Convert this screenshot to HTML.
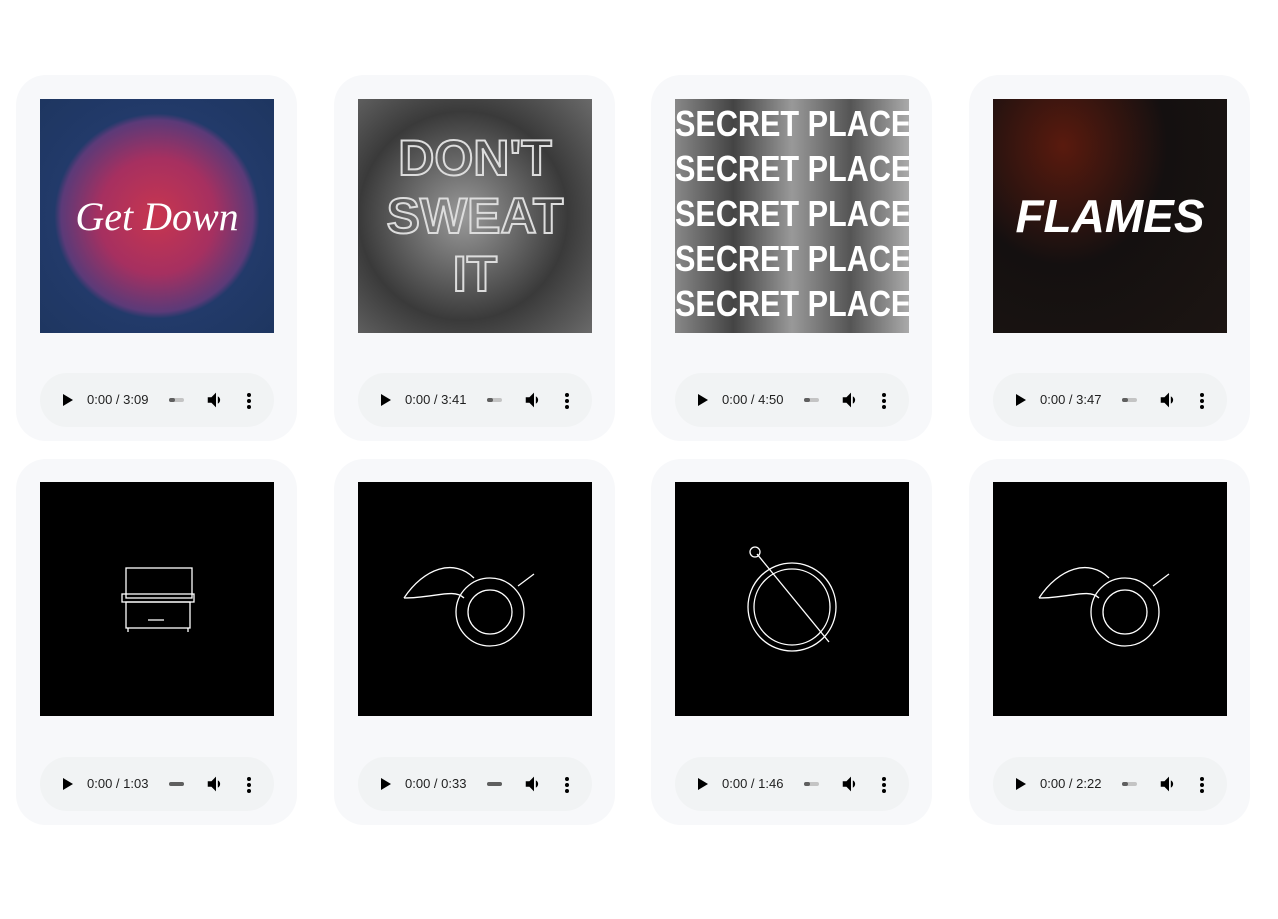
<!DOCTYPE html>
<html><head><meta charset="utf-8"><style>
body{margin:0;background:#fff;width:1278px;height:919px;position:relative;font-family:"Liberation Sans",sans-serif;overflow:hidden}
.card{position:absolute;width:281px;height:366px;background:#f7f8fa;border-radius:30px}
.img{position:absolute;left:24px;top:24px;width:234px;height:234px;overflow:hidden;background:#000}
.aud{position:absolute;left:24px;top:298px;width:234px;height:54px;border-radius:27px;background:#f1f3f4}
.aud .play{position:absolute;left:23px;top:21px;width:0;height:0;border-left:10px solid #000;border-top:6px solid transparent;border-bottom:6px solid transparent}
.aud .t{position:absolute;left:47px;top:19px;font-size:13px;color:#1f1f1f}
.aud .sl{position:absolute;left:129px;top:25px;width:15px;height:4px;border-radius:2px;background:#c4c4c4}
.aud .sl i{position:absolute;left:0;top:0;width:6px;height:4px;border-radius:2px;background:#5f5f5f}
.aud svg{position:absolute}
.dot{position:absolute;left:207px;width:4px;height:4px;border-radius:2px;background:#000}
.c{display:flex;align-items:center;justify-content:center;width:100%;height:100%}
</style></head><body>

<div class="card" style="left:16px;top:75px"><div class="img" style="background:radial-gradient(circle at 50% 50%,#c8354f 0,#a63060 35%,#5b3a78 58%,#223a6a 62%,#1e3660 100%)"><div class="c" style="color:#fff;font-family:'Liberation Serif',serif;font-style:italic;font-size:40px">Get Down</div></div>
<div class="aud"><div class="play"></div><div class="t">0:00 / 3:09</div><div class="sl"><i></i></div><svg style="left:165px;top:16px" width="22" height="22" viewBox="0 0 24 24"><path d="M3 9v6h4l5 5V4L7 9H3zm13.5 3A4.5 4.5 0 0 0 14 8v8a4.5 4.5 0 0 0 2.5-4z"/></svg><div class="dot" style="top:20px"></div><div class="dot" style="top:26px"></div><div class="dot" style="top:32px"></div></div></div>

<div class="card" style="left:334px;top:75px"><div class="img" style="background:radial-gradient(circle at 45% 50%,#9a9a9a,#3a3a3a 60%,#6a6a6a)"><div class="c" style="color:transparent;-webkit-text-stroke:2px #ddd;font-weight:bold;font-size:50px;line-height:58px;text-align:center">DON'T<br>SWEAT<br>IT</div></div>
<div class="aud"><div class="play"></div><div class="t">0:00 / 3:41</div><div class="sl"><i></i></div><svg style="left:165px;top:16px" width="22" height="22" viewBox="0 0 24 24"><path d="M3 9v6h4l5 5V4L7 9H3zm13.5 3A4.5 4.5 0 0 0 14 8v8a4.5 4.5 0 0 0 2.5-4z"/></svg><div class="dot" style="top:20px"></div><div class="dot" style="top:26px"></div><div class="dot" style="top:32px"></div></div></div>

<div class="card" style="left:651px;top:75px"><div class="img" style="background:linear-gradient(90deg,#888,#444,#999,#555,#aaa)"><div style="color:#fff;font-weight:bold;font-size:36px;line-height:45px;white-space:nowrap;transform:scaleX(0.85);transform-origin:0 0;margin-top:2px">SECRET PLACES<br>SECRET PLACES<br>SECRET PLACES<br>SECRET PLACES<br>SECRET PLACES</div></div>
<div class="aud"><div class="play"></div><div class="t">0:00 / 4:50</div><div class="sl"><i></i></div><svg style="left:165px;top:16px" width="22" height="22" viewBox="0 0 24 24"><path d="M3 9v6h4l5 5V4L7 9H3zm13.5 3A4.5 4.5 0 0 0 14 8v8a4.5 4.5 0 0 0 2.5-4z"/></svg><div class="dot" style="top:20px"></div><div class="dot" style="top:26px"></div><div class="dot" style="top:32px"></div></div></div>

<div class="card" style="left:969px;top:75px"><div class="img" style="background:radial-gradient(ellipse at 30% 20%,#5a1a0e,#141010 45%,#1c1512)"><div class="c" style="color:#fff;font-weight:bold;font-style:italic;font-size:46px">FLAMES</div></div>
<div class="aud"><div class="play"></div><div class="t">0:00 / 3:47</div><div class="sl"><i></i></div><svg style="left:165px;top:16px" width="22" height="22" viewBox="0 0 24 24"><path d="M3 9v6h4l5 5V4L7 9H3zm13.5 3A4.5 4.5 0 0 0 14 8v8a4.5 4.5 0 0 0 2.5-4z"/></svg><div class="dot" style="top:20px"></div><div class="dot" style="top:26px"></div><div class="dot" style="top:32px"></div></div></div>

<div class="card" style="left:16px;top:459px"><div class="img" style="top:23px"><svg width="234" height="234" fill="none" stroke="#fff" stroke-width="1.3"><rect x="86" y="86" width="66" height="30"/><rect x="82" y="112" width="72" height="8"/><rect x="86" y="120" width="64" height="26"/><path d="M88 146v4M148 146v4M108 138h16"/></svg></div>
<div class="aud"><div class="play"></div><div class="t">0:00 / 1:03</div><div class="sl"><i style="width:15px"></i></div><svg style="left:165px;top:16px" width="22" height="22" viewBox="0 0 24 24"><path d="M3 9v6h4l5 5V4L7 9H3zm13.5 3A4.5 4.5 0 0 0 14 8v8a4.5 4.5 0 0 0 2.5-4z"/></svg><div class="dot" style="top:20px"></div><div class="dot" style="top:26px"></div><div class="dot" style="top:32px"></div></div></div>

<div class="card" style="left:334px;top:459px"><div class="img" style="top:23px"><svg width="234" height="234" fill="none" stroke="#fff" stroke-width="1.3"><path d="M46 116c20-30 50-40 70-20"/><path d="M46 116c30 0 50-10 60 0"/><circle cx="132" cy="130" r="34"/><circle cx="132" cy="130" r="22"/><path d="M160 104l16-12"/></svg></div>
<div class="aud"><div class="play"></div><div class="t">0:00 / 0:33</div><div class="sl"><i style="width:15px"></i></div><svg style="left:165px;top:16px" width="22" height="22" viewBox="0 0 24 24"><path d="M3 9v6h4l5 5V4L7 9H3zm13.5 3A4.5 4.5 0 0 0 14 8v8a4.5 4.5 0 0 0 2.5-4z"/></svg><div class="dot" style="top:20px"></div><div class="dot" style="top:26px"></div><div class="dot" style="top:32px"></div></div></div>

<div class="card" style="left:651px;top:459px"><div class="img" style="top:23px"><svg width="234" height="234" fill="none" stroke="#fff" stroke-width="1.3"><circle cx="117" cy="125" r="44"/><circle cx="117" cy="125" r="38"/><path d="M82 72l72 88"/><circle cx="80" cy="70" r="5"/></svg></div>
<div class="aud"><div class="play"></div><div class="t">0:00 / 1:46</div><div class="sl"><i></i></div><svg style="left:165px;top:16px" width="22" height="22" viewBox="0 0 24 24"><path d="M3 9v6h4l5 5V4L7 9H3zm13.5 3A4.5 4.5 0 0 0 14 8v8a4.5 4.5 0 0 0 2.5-4z"/></svg><div class="dot" style="top:20px"></div><div class="dot" style="top:26px"></div><div class="dot" style="top:32px"></div></div></div>

<div class="card" style="left:969px;top:459px"><div class="img" style="top:23px"><svg width="234" height="234" fill="none" stroke="#fff" stroke-width="1.3"><path d="M46 116c20-30 50-40 70-20"/><path d="M46 116c30 0 50-10 60 0"/><circle cx="132" cy="130" r="34"/><circle cx="132" cy="130" r="22"/><path d="M160 104l16-12"/></svg></div>
<div class="aud"><div class="play"></div><div class="t">0:00 / 2:22</div><div class="sl"><i></i></div><svg style="left:165px;top:16px" width="22" height="22" viewBox="0 0 24 24"><path d="M3 9v6h4l5 5V4L7 9H3zm13.5 3A4.5 4.5 0 0 0 14 8v8a4.5 4.5 0 0 0 2.5-4z"/></svg><div class="dot" style="top:20px"></div><div class="dot" style="top:26px"></div><div class="dot" style="top:32px"></div></div></div>

</body></html>
